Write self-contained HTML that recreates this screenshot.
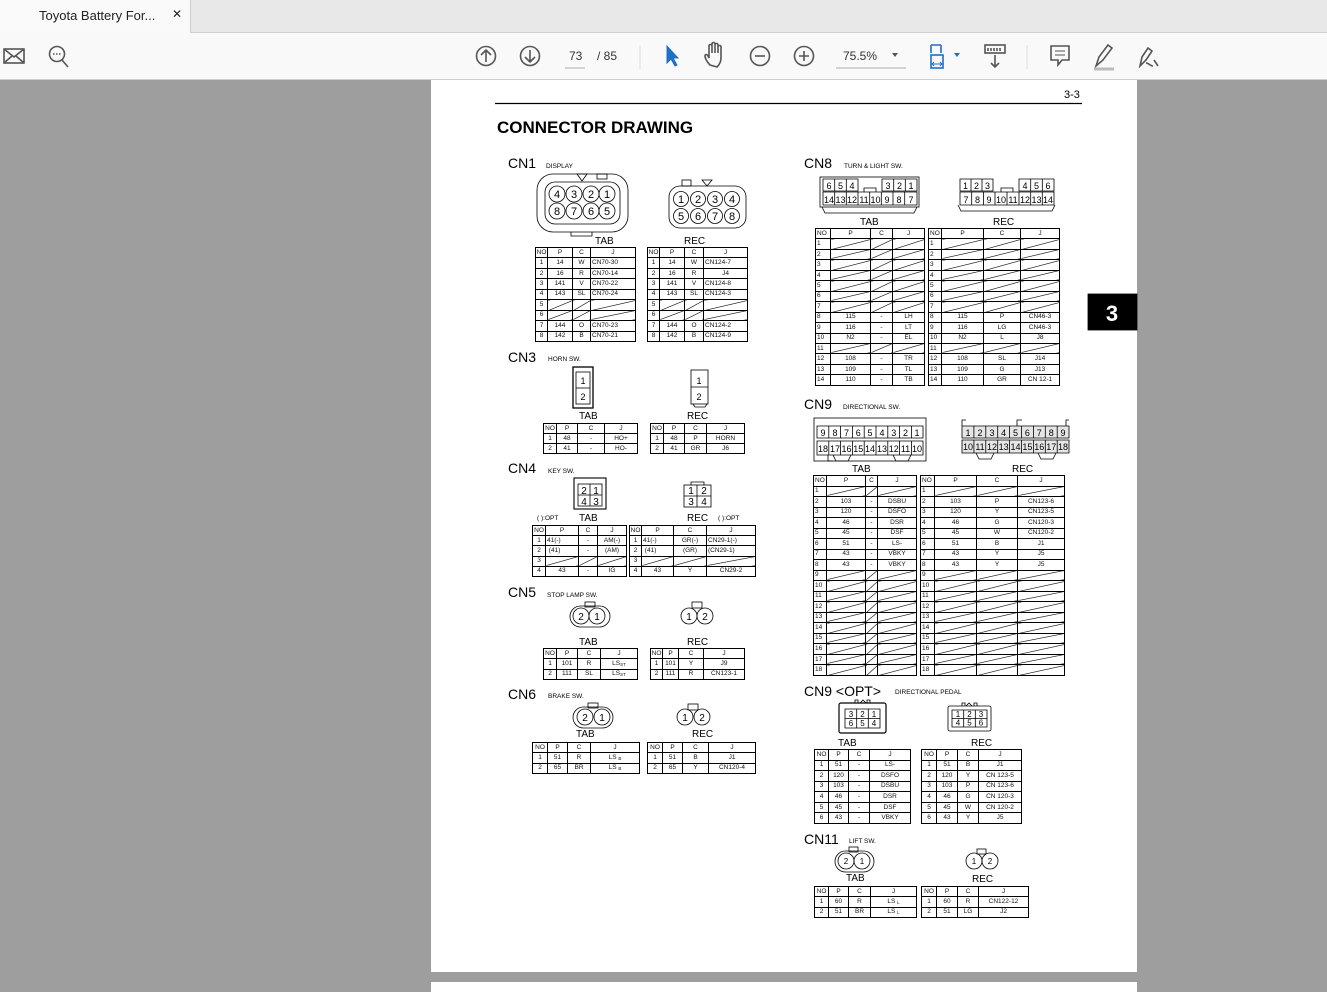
<!DOCTYPE html>
<html><head><meta charset="utf-8"><style>
body{margin:0;width:1327px;height:989px;overflow:hidden;background:#9e9e9e;font-family:"Liberation Sans",sans-serif;position:relative}
.tabbar{position:absolute;left:0;top:0;width:1327px;height:32px;background:#e8e8e8;border-bottom:1px solid #d0d0d0}
.tab{position:absolute;left:0;top:0;width:190px;height:33px;background:#fafafa;border-right:1px solid #d0d0d0;font-size:13px;color:#222}
.tool{position:absolute;left:0;top:33px;width:1327px;height:46px;background:#f9f9f9;border-bottom:1px solid #cfcfcf}
.page{position:absolute;left:431px;top:80px;width:706px;height:892px;background:#fff}
.page2{position:absolute;left:431px;top:982px;width:706px;height:10px;background:#fff}
table.t{position:absolute;border-collapse:collapse;table-layout:fixed;font-size:6.5px;color:#111}
table.t td{border:1px solid #000;padding:0;text-align:center;line-height:6px;overflow:hidden;white-space:nowrap}
table.t td.l{text-align:left;padding-left:1px}
td.x{background:linear-gradient(to bottom right,transparent calc(50% - .6px),#000 50%,transparent calc(50% + .6px))}
.s{font-size:4.5px;position:relative;top:1px}
</style></head><body>
<div class="tabbar"></div>
<div class="tab"><span style="position:absolute;left:39px;top:8px">Toyota Battery For...</span><span style="position:absolute;left:172px;top:7px;font-size:12px">✕</span></div>
<div class="tool">
<svg width="1327" height="46" style="position:absolute;left:0;top:0" fill="none" stroke="#555" stroke-width="1.6">
<rect x="4" y="16" width="20" height="14"/><path d="M4 16l10 8 10-8M4 30l8-7M24 30l-8-7"/>
<circle cx="57" cy="21" r="7.5"/><path d="M62 27l6 7"/><path d="M53 21h8" stroke-dasharray="1.5 1.5"/>
<circle cx="486" cy="23" r="9.5"/><path d="M486 29v-12M481 22l5-5 5 5"/>
<circle cx="530" cy="23" r="9.5"/><path d="M530 17v12M525 24l5 5 5-5"/>
<path d="M565 35h20" stroke="#aaa" stroke-width="1"/>
<path d="M640 12v24" stroke="#ddd" stroke-width="1"/>
<path d="M667 13l0 17 4-4 4 7 2-1-4-7 5 0z" fill="#1f6fc5" stroke="#1f6fc5" stroke-width="1"/>
<path d="M710 32c-3-3-5-7-5-9 0-2 2-2 3 0l1 2v-12c0-2 3-2 3 0v7-9c0-2 3-2 3 0v9-8c0-2 3-2 3 0v8-6c0-2 3-2 3 0v11c0 4-2 7-4 9z"/>
<circle cx="760" cy="23" r="9.5"/><path d="M755 23h10"/>
<circle cx="804" cy="23" r="9.5"/><path d="M799 23h10M804 18v10"/>
<path d="M836 35h70" stroke="#aaa" stroke-width="1"/>
<path d="M892 20l3 4 3-4z" fill="#555" stroke="none"/>
<path d="M931 12v8M941 12v8M931 12h10" stroke="#1f6fc5"/><rect x="931" y="22" width="12" height="13" stroke="#1f6fc5"/><path d="M933 31h8M934 29l-2 2 2 2M940 29l2 2-2 2" stroke="#1f6fc5" stroke-width="1"/>
<path d="M954 20l3 4 3-4z" fill="#1f6fc5" stroke="none"/>
<rect x="985" y="12" width="20" height="8"/><path d="M988 15v3M991 15v3M994 15v3M997 15v3M1000 15v3M995 22v12M991 30l4 4 4-4"/>
<path d="M1027 12v24" stroke="#ddd" stroke-width="1"/>
<path d="M1051 13h18v14h-7l-4 5v-5h-7z"/><path d="M1055 18h10M1055 22h10" stroke-width="1"/>
<path d="M1096 33l3-9 9-12 4 3-9 12z" /><path d="M1094 36h20" stroke="#bbb" stroke-width="3"/>
<path d="M1140 33l2-9 6-9 4 3-6 9zM1146 30c3 0 4 3 7 3M1154 27l4 6" />
</svg>
<span style="position:absolute;left:569px;top:16px;font-size:12px;color:#333">73</span>
<span style="position:absolute;left:597px;top:16px;font-size:12px;color:#333">/ 85</span>
<span style="position:absolute;left:843px;top:16px;font-size:12px;color:#333">75.5%</span>
</div>
<div class="page"></div>
<div class="page2"></div>

<svg width="1327" height="989" style="position:absolute;left:0;top:0" font-family="Liberation Sans" fill="none" stroke="#000" stroke-width="0.8">
<path d="M495 103.5H1082" stroke-width="1.3"/>
<text x="1064" y="98" font-size="11" fill="#000" stroke="none">3-3</text>
<text x="497" y="133" font-size="17" font-weight="bold" fill="#000" stroke="none">CONNECTOR DRAWING</text>
<rect x="1088" y="294" width="49" height="36" fill="#000"/>
<text x="1112" y="321" font-size="22" font-weight="bold" fill="#fff" stroke="none" text-anchor="middle">3</text>
<g fill="#000" stroke="none" font-size="14">
<text x="508" y="168">CN1</text><text x="508" y="362">CN3</text><text x="508" y="473">CN4</text><text x="508" y="597">CN5</text><text x="508" y="699">CN6</text>
<text x="804" y="168">CN8</text><text x="804" y="409">CN9</text><text x="804" y="696">CN9 &lt;OPT&gt;</text><text x="804" y="844">CN11</text>
</g>
<g fill="#000" stroke="none" font-size="6.5">
<text x="546" y="168">DISPLAY</text><text x="548" y="361">HORN SW.</text><text x="548" y="473">KEY SW.</text><text x="547" y="597">STOP LAMP SW.</text><text x="548" y="698">BRAKE SW.</text>
<text x="844" y="168">TURN &amp; LIGHT SW.</text><text x="843" y="409">DIRECTIONAL SW.</text><text x="895" y="694">DIRECTIONAL PEDAL</text><text x="849" y="843">LIFT SW.</text>
<text x="537" y="520">( ):OPT</text><text x="718" y="520">( ):OPT</text>
</g>
<g fill="#000" stroke="none" font-size="10">
<text x="595" y="244">TAB</text><text x="684" y="244">REC</text>
<text x="579" y="419">TAB</text><text x="687" y="419">REC</text>
<text x="579" y="521">TAB</text><text x="687" y="521">REC</text>
<text x="579" y="645">TAB</text><text x="687" y="645">REC</text>
<text x="576" y="737">TAB</text><text x="692" y="737">REC</text>
<text x="860" y="225">TAB</text><text x="993" y="225">REC</text>
<text x="852" y="472">TAB</text><text x="1012" y="472">REC</text>
<text x="838" y="746">TAB</text><text x="971" y="746">REC</text>
<text x="846" y="881">TAB</text><text x="972" y="882">REC</text>
</g>
<rect x="537" y="174" width="91" height="58" rx="16"/><rect x="545" y="182" width="75" height="42" rx="10"/>
<path d="M577 174h10l-5 7z"/><rect x="597" y="174" width="10" height="5"/><path d="M571 232v4h21v-4"/>
<g font-size="11" fill="#000" stroke="none" text-anchor="middle"><text x="557" y="198">4</text><text x="574" y="198">3</text><text x="591" y="198">2</text><text x="607" y="198">1</text><text x="557" y="215">8</text><text x="574" y="215">7</text><text x="591" y="215">6</text><text x="607" y="215">5</text></g>
<circle cx="557" cy="194" r="8"/><circle cx="574" cy="194" r="8"/><circle cx="591" cy="194" r="8"/><circle cx="607" cy="194" r="8"/>
<circle cx="557" cy="211" r="8"/><circle cx="574" cy="211" r="8"/><circle cx="591" cy="211" r="8"/><circle cx="607" cy="211" r="8"/>
<rect x="669" y="186" width="77" height="42" rx="11"/>
<path d="M702 180h10l-5 6z"/><rect x="682" y="180" width="9" height="6"/>
<g font-size="11" fill="#000" stroke="none" text-anchor="middle"><text x="681" y="203">1</text><text x="698" y="203">2</text><text x="715" y="203">3</text><text x="732" y="203">4</text><text x="681" y="220">5</text><text x="698" y="220">6</text><text x="715" y="220">7</text><text x="732" y="220">8</text></g>
<circle cx="681" cy="199" r="7.5"/><circle cx="698" cy="199" r="7.5"/><circle cx="715" cy="199" r="7.5"/><circle cx="732" cy="199" r="7.5"/>
<circle cx="681" cy="216" r="7.5"/><circle cx="698" cy="216" r="7.5"/><circle cx="715" cy="216" r="7.5"/><circle cx="732" cy="216" r="7.5"/>
<rect x="573" y="367" width="20" height="41" stroke-width="1.3"/><rect x="576" y="372" width="14" height="32"/><path d="M576 388h14"/>
<rect x="691" y="370" width="17" height="34"/><path d="M691 387h17M693 404l2 3h10l2-3"/>
<g font-size="9" fill="#000" stroke="none" text-anchor="middle"><text x="583" y="384">1</text><text x="583" y="400">2</text><text x="699" y="384">1</text><text x="699" y="400">2</text></g>
<rect x="574" y="478" width="32" height="31" stroke-width="1.1"/><rect x="578" y="484" width="24" height="22"/><path d="M590 484v22M578 495h24"/>
<rect x="684" y="485" width="27" height="22"/><path d="M697 485v22M684 496h27M691 485v-3h13v3"/>
<g font-size="10" fill="#000" stroke="none" text-anchor="middle"><text x="584" y="494">2</text><text x="596" y="494">1</text><text x="584" y="505">4</text><text x="596" y="505">3</text><text x="691" y="494">1</text><text x="704" y="494">2</text><text x="691" y="505">3</text><text x="704" y="505">4</text></g>
<rect x="570" y="606" width="40" height="21" rx="10.5"/><rect x="585" y="602" width="10" height="5"/>
<circle cx="581" cy="616" r="8"/><circle cx="597" cy="616" r="8"/>
<circle cx="689" cy="616" r="8"/><circle cx="705" cy="616" r="8"/><rect x="692" y="602" width="10" height="6"/>
<rect x="573" y="707" width="40" height="21" rx="10.5"/><rect x="588" y="703" width="10" height="5"/>
<circle cx="585" cy="717" r="8"/><circle cx="602" cy="717" r="8"/>
<circle cx="685" cy="717" r="8"/><circle cx="702" cy="717" r="8"/><rect x="688" y="704" width="10" height="6"/>
<rect x="835" y="851" width="39" height="21" rx="10.5"/><rect x="849" y="847" width="9" height="5"/>
<circle cx="846" cy="861" r="8"/><circle cx="862" cy="861" r="8"/>
<circle cx="974" cy="861" r="8"/><circle cx="990" cy="861" r="8"/><rect x="977" y="849" width="9" height="5"/>
<g font-size="10" fill="#000" stroke="none" text-anchor="middle">
<text x="581" y="620">2</text><text x="597" y="620">1</text><text x="689" y="620">1</text><text x="705" y="620">2</text>
<text x="585" y="721">2</text><text x="602" y="721">1</text><text x="685" y="721">1</text><text x="702" y="721">2</text>
<text x="846" y="864" font-size="8">2</text><text x="862" y="864" font-size="8">1</text><text x="974" y="864" font-size="8">1</text><text x="990" y="864" font-size="8">2</text>
</g>
<rect x="820" y="177" width="99" height="30"/><path d="M822 207l3 6h89l3-6"/>
<path d="M823 179h35v12h-35zM834.7 179v12M846.3 179v12M882 179h35v12h-35zM893.7 179v12M905.3 179v12M823 192h94v13h-94z"/>
<path d="M834.7 192v13M846.3 192v13M858 192v13M869.7 192v13M881.3 192v13M893 192v13M904.7 192v13M864 192v-4h12v4"/>
<g font-size="9" fill="#000" stroke="none" text-anchor="middle">
<text x="829" y="189">6</text><text x="840.5" y="189">5</text><text x="852" y="189">4</text><text x="888" y="189">3</text><text x="899.5" y="189">2</text><text x="911" y="189">1</text>
<text x="829" y="203">14</text><text x="840.5" y="203">13</text><text x="852" y="203">12</text><text x="864" y="203">11</text><text x="875.5" y="203">10</text><text x="887" y="203">9</text><text x="899" y="203">8</text><text x="911" y="203">7</text>
</g>
<path d="M960 179h33v12h-33zM971 179v12M982 179v12M1019 179h35v12h-35zM1030.7 179v12M1042.3 179v12M960 192h94v13h-94z"/>
<path d="M971.7 192v13M983.5 192v13M995 192v13M1007 192v13M1019 192v13M1030.7 192v13M1042.3 192v13M1001 192v-4h12v4M958 205l3 6h91l3-6"/>
<g font-size="9" fill="#000" stroke="none" text-anchor="middle">
<text x="965.5" y="189">1</text><text x="976.5" y="189">2</text><text x="987.5" y="189">3</text><text x="1025" y="189">4</text><text x="1036.5" y="189">5</text><text x="1048" y="189">6</text>
<text x="966" y="203">7</text><text x="977.5" y="203">8</text><text x="989" y="203">9</text><text x="1001" y="203">10</text><text x="1013" y="203">11</text><text x="1025" y="203">12</text><text x="1036.5" y="203">13</text><text x="1048" y="203">14</text>
</g>
<rect x="814" y="418" width="112" height="43"/>
<path d="M817 426h106v12h-106zM817 441h106v14h-106zM828.8 426v12M840.6 426v12M852.4 426v12M864.2 426v12M876 426v12M887.8 426v12M899.6 426v12M911.4 426v12M828.8 441v14M840.6 441v14M852.4 441v14M864.2 441v14M876 441v14M887.8 441v14M899.6 441v14M911.4 441v14M828 455v6h5M833 455l3 6h12l3-6M893 455l3 6h12l3-6"/>
<g font-size="9" fill="#000" stroke="none" text-anchor="middle">
<text x="823" y="436">9</text><text x="835" y="436">8</text><text x="846.5" y="436">7</text><text x="858.3" y="436">6</text><text x="870" y="436">5</text><text x="882" y="436">4</text><text x="893.7" y="436">3</text><text x="905.5" y="436">2</text><text x="917" y="436">1</text>
<text x="823" y="452">18</text><text x="835" y="452">17</text><text x="846.5" y="452">16</text><text x="858.3" y="452">15</text><text x="870" y="452">14</text><text x="882" y="452">13</text><text x="893.7" y="452">12</text><text x="905.5" y="452">11</text><text x="917" y="452">10</text>
</g>
<path d="M962 426h107v12h-107zM962 440h107v13h-107z" fill="#e6e6e6"/>
<path d="M973.9 426v12M985.8 426v12M997.7 426v12M1009.6 426v12M1021.5 426v12M1033.4 426v12M1045.3 426v12M1057.2 426v12M973.9 440v13M985.8 440v13M997.7 440v13M1009.6 440v13M1021.5 440v13M1033.4 440v13M1045.3 440v13M1057.2 440v13M976 453l3 6h12l3-6M1038 453l3 6h12l3-6M962 426v-6h4M1017 426v-6h5M1066 426v-6h3"/>
<g font-size="9" fill="#000" stroke="none" text-anchor="middle">
<text x="968" y="436">1</text><text x="980" y="436">2</text><text x="992" y="436">3</text><text x="1003.6" y="436">4</text><text x="1015.5" y="436">5</text><text x="1027.4" y="436">6</text><text x="1039.3" y="436">7</text><text x="1051.2" y="436">8</text><text x="1063" y="436">9</text>
<text x="968" y="450">10</text><text x="980" y="450">11</text><text x="992" y="450">12</text><text x="1003.6" y="450">13</text><text x="1015.5" y="450">14</text><text x="1027.4" y="450">15</text><text x="1039.3" y="450">16</text><text x="1051.2" y="450">17</text><text x="1063" y="450">18</text>
</g>
<rect x="839" y="703" width="47" height="30" rx="2" stroke-width="1.2"/><path d="M845 709h35v19h-35zM845 718.5h35M856.7 709v19M868.3 709v19M855 703v-3h3v3M867 703v-3h3v3M860 703l3-3 3 3"/>
<rect x="948" y="706" width="43" height="25" rx="2"/><path d="M952 710h35v17h-35zM952 718.5h35M963.7 710v17M975.3 710v17M962 706v-3h3v3M974 706v-3h3v3M966 706l3-3 3 3"/>
<g font-size="8" fill="#000" stroke="none" text-anchor="middle">
<text x="851" y="717">3</text><text x="862.5" y="717">2</text><text x="874" y="717">1</text><text x="851" y="726">6</text><text x="862.5" y="726">5</text><text x="874" y="726">4</text>
<text x="958" y="717">1</text><text x="969.5" y="717">2</text><text x="981" y="717">3</text><text x="958" y="725.5">4</text><text x="969.5" y="725.5">5</text><text x="981" y="725.5">6</text>
</g>
</svg>

<table class="t" style="left:535px;top:247px;width:101px;height:95px"><colgroup><col style="width:12px"><col style="width:25px"><col style="width:18px"><col></colgroup>
<tr><td>NO</td><td>P</td><td>C</td><td>J</td></tr>
<tr><td>1</td><td>14</td><td>W</td><td class="l">CN70-30</td></tr>
<tr><td>2</td><td>16</td><td>R</td><td class="l">CN70-14</td></tr>
<tr><td>3</td><td>141</td><td>V</td><td class="l">CN70-22</td></tr>
<tr><td>4</td><td>143</td><td>SL</td><td class="l">CN70-24</td></tr>
<tr><td>5</td><td class="x"></td><td class="x"></td><td class="x"></td></tr>
<tr><td>6</td><td class="x"></td><td class="x"></td><td class="x"></td></tr>
<tr><td>7</td><td>144</td><td>O</td><td class="l">CN70-23</td></tr>
<tr><td>8</td><td>142</td><td>B</td><td class="l">CN70-21</td></tr></table>
<table class="t" style="left:647px;top:247px;width:101px;height:95px"><colgroup><col style="width:12px"><col style="width:25px"><col style="width:19px"><col></colgroup>
<tr><td>NO</td><td>P</td><td>C</td><td>J</td></tr>
<tr><td>1</td><td>14</td><td>W</td><td class="l">CN124-7</td></tr>
<tr><td>2</td><td>16</td><td>R</td><td>J4</td></tr>
<tr><td>3</td><td>141</td><td>V</td><td class="l">CN124-8</td></tr>
<tr><td>4</td><td>143</td><td>SL</td><td class="l">CN124-3</td></tr>
<tr><td>5</td><td class="x"></td><td class="x"></td><td class="x"></td></tr>
<tr><td>6</td><td class="x"></td><td class="x"></td><td class="x"></td></tr>
<tr><td>7</td><td>144</td><td>O</td><td class="l">CN124-2</td></tr>
<tr><td>8</td><td>142</td><td>B</td><td class="l">CN124-9</td></tr></table>
<table class="t" style="left:543px;top:423px;width:95px;height:31px"><colgroup><col style="width:13px"><col style="width:21px"><col style="width:27px"><col></colgroup>
<tr><td>NO</td><td>P</td><td>C</td><td>J</td></tr><tr><td>1</td><td>48</td><td>-</td><td>HO+</td></tr><tr><td>2</td><td>41</td><td>-</td><td>HO-</td></tr></table>
<table class="t" style="left:650px;top:423px;width:95px;height:31px"><colgroup><col style="width:13px"><col style="width:21px"><col style="width:22px"><col></colgroup>
<tr><td>NO</td><td>P</td><td>C</td><td>J</td></tr><tr><td>1</td><td>48</td><td>P</td><td>HORN</td></tr><tr><td>2</td><td>41</td><td>GR</td><td>J6</td></tr></table>
<table class="t" style="left:532px;top:525px;width:95px;height:52px"><colgroup><col style="width:13px"><col style="width:33px"><col style="width:19px"><col></colgroup>
<tr><td>NO</td><td>P</td><td>C</td><td>J</td></tr><tr><td>1</td><td class="l">41(-)</td><td>-</td><td>AM(-)</td></tr><tr><td>2</td><td class="l">&nbsp;(41)</td><td>-</td><td>(AM)</td></tr>
<tr><td>3</td><td class="x"></td><td class="x"></td><td class="x"></td></tr><tr><td>4</td><td>43</td><td>-</td><td>IG</td></tr></table>
<table class="t" style="left:629px;top:525px;width:127px;height:52px"><colgroup><col style="width:12px"><col style="width:32px"><col style="width:33px"><col></colgroup>
<tr><td>NO</td><td>P</td><td>C</td><td>J</td></tr><tr><td>1</td><td class="l">41(-)</td><td>GR(-)</td><td class="l">CN29-1(-)</td></tr><tr><td>2</td><td class="l">&nbsp;(41)</td><td>(GR)</td><td class="l">(CN29-1)</td></tr>
<tr><td>3</td><td class="x"></td><td class="x"></td><td class="x"></td></tr><tr><td>4</td><td>43</td><td>Y</td><td>CN29-2</td></tr></table>
<table class="t" style="left:543px;top:648px;width:95px;height:32px"><colgroup><col style="width:13px"><col style="width:21px"><col style="width:23px"><col></colgroup>
<tr><td>NO</td><td>P</td><td>C</td><td>J</td></tr><tr><td>1</td><td>101</td><td>R</td><td>LS<span class="s">ST</span></td></tr><tr><td>2</td><td>111</td><td>SL</td><td>LS<span class="s">ST</span></td></tr></table>
<table class="t" style="left:650px;top:648px;width:95px;height:32px"><colgroup><col style="width:12px"><col style="width:16px"><col style="width:25px"><col></colgroup>
<tr><td>NO</td><td>P</td><td>C</td><td>J</td></tr><tr><td>1</td><td>101</td><td>Y</td><td>J9</td></tr><tr><td>2</td><td>111</td><td>R</td><td>CN123-1</td></tr></table>
<table class="t" style="left:532px;top:742px;width:108px;height:32px"><colgroup><col style="width:15px"><col style="width:20px"><col style="width:23px"><col></colgroup>
<tr><td>NO</td><td>P</td><td>C</td><td>J</td></tr><tr><td>1</td><td>51</td><td>R</td><td>LS <span class="s">B</span></td></tr><tr><td>2</td><td>65</td><td>BR</td><td>LS <span class="s">B</span></td></tr></table>
<table class="t" style="left:647px;top:742px;width:109px;height:32px"><colgroup><col style="width:15px"><col style="width:20px"><col style="width:26px"><col></colgroup>
<tr><td>NO</td><td>P</td><td>C</td><td>J</td></tr><tr><td>1</td><td>51</td><td>B</td><td>J1</td></tr><tr><td>2</td><td>65</td><td>Y</td><td>CN120-4</td></tr></table>
<table class="t" style="left:815px;top:228px;width:110px;height:158px"><colgroup><col style="width:15px"><col style="width:40px"><col style="width:22px"><col></colgroup>
<tr><td class="l">NO</td><td>P</td><td>C</td><td>J</td></tr>
<tr><td class="l">1</td><td class="x"></td><td class="x"></td><td class="x"></td></tr>
<tr><td class="l">2</td><td class="x"></td><td class="x"></td><td class="x"></td></tr>
<tr><td class="l">3</td><td class="x"></td><td class="x"></td><td class="x"></td></tr>
<tr><td class="l">4</td><td class="x"></td><td class="x"></td><td class="x"></td></tr>
<tr><td class="l">5</td><td class="x"></td><td class="x"></td><td class="x"></td></tr>
<tr><td class="l">6</td><td class="x"></td><td class="x"></td><td class="x"></td></tr>
<tr><td class="l">7</td><td class="x"></td><td class="x"></td><td class="x"></td></tr>
<tr><td class="l">8</td><td>115</td><td>-</td><td>LH</td></tr>
<tr><td class="l">9</td><td>116</td><td>-</td><td>LT</td></tr>
<tr><td class="l">10</td><td>N2</td><td>-</td><td>EL</td></tr>
<tr><td class="l">11</td><td class="x"></td><td class="x"></td><td class="x"></td></tr>
<tr><td class="l">12</td><td>108</td><td>-</td><td>TR</td></tr>
<tr><td class="l">13</td><td>109</td><td>-</td><td>TL</td></tr>
<tr><td class="l">14</td><td>110</td><td>-</td><td>TB</td></tr></table>
<table class="t" style="left:928px;top:228px;width:132px;height:158px"><colgroup><col style="width:13px"><col style="width:42px"><col style="width:37px"><col></colgroup>
<tr><td class="l">NO</td><td>P</td><td>C</td><td>J</td></tr>
<tr><td class="l">1</td><td class="x"></td><td class="x"></td><td class="x"></td></tr>
<tr><td class="l">2</td><td class="x"></td><td class="x"></td><td class="x"></td></tr>
<tr><td class="l">3</td><td class="x"></td><td class="x"></td><td class="x"></td></tr>
<tr><td class="l">4</td><td class="x"></td><td class="x"></td><td class="x"></td></tr>
<tr><td class="l">5</td><td class="x"></td><td class="x"></td><td class="x"></td></tr>
<tr><td class="l">6</td><td class="x"></td><td class="x"></td><td class="x"></td></tr>
<tr><td class="l">7</td><td class="x"></td><td class="x"></td><td class="x"></td></tr>
<tr><td class="l">8</td><td>115</td><td>P</td><td>CN46-3</td></tr>
<tr><td class="l">9</td><td>116</td><td>LG</td><td>CN46-3</td></tr>
<tr><td class="l">10</td><td>N2</td><td>L</td><td>J8</td></tr>
<tr><td class="l">11</td><td class="x"></td><td class="x"></td><td class="x"></td></tr>
<tr><td class="l">12</td><td>108</td><td>SL</td><td>J14</td></tr>
<tr><td class="l">13</td><td>109</td><td>G</td><td>J13</td></tr>
<tr><td class="l">14</td><td>110</td><td>GR</td><td>CN 12-1</td></tr></table>
<table class="t" style="left:813px;top:475px;width:104px;height:201px"><colgroup><col style="width:13px"><col style="width:39px"><col style="width:12px"><col></colgroup>
<tr><td class="l">NO</td><td>P</td><td>C</td><td>J</td></tr>
<tr><td class="l">1</td><td class="x"></td><td class="x"></td><td class="x"></td></tr>
<tr><td class="l">2</td><td>103</td><td>-</td><td>DSBU</td></tr>
<tr><td class="l">3</td><td>120</td><td>-</td><td>DSFO</td></tr>
<tr><td class="l">4</td><td>46</td><td>-</td><td>DSR</td></tr>
<tr><td class="l">5</td><td>45</td><td>-</td><td>DSF</td></tr>
<tr><td class="l">6</td><td>51</td><td>-</td><td>LS-</td></tr>
<tr><td class="l">7</td><td>43</td><td>-</td><td>VBKY</td></tr>
<tr><td class="l">8</td><td>43</td><td>-</td><td>VBKY</td></tr>
<tr><td class="l">9</td><td class="x"></td><td class="x"></td><td class="x"></td></tr>
<tr><td class="l">10</td><td class="x"></td><td class="x"></td><td class="x"></td></tr>
<tr><td class="l">11</td><td class="x"></td><td class="x"></td><td class="x"></td></tr>
<tr><td class="l">12</td><td class="x"></td><td class="x"></td><td class="x"></td></tr>
<tr><td class="l">13</td><td class="x"></td><td class="x"></td><td class="x"></td></tr>
<tr><td class="l">14</td><td class="x"></td><td class="x"></td><td class="x"></td></tr>
<tr><td class="l">15</td><td class="x"></td><td class="x"></td><td class="x"></td></tr>
<tr><td class="l">16</td><td class="x"></td><td class="x"></td><td class="x"></td></tr>
<tr><td class="l">17</td><td class="x"></td><td class="x"></td><td class="x"></td></tr>
<tr><td class="l">18</td><td class="x"></td><td class="x"></td><td class="x"></td></tr></table>
<table class="t" style="left:920px;top:475px;width:145px;height:201px"><colgroup><col style="width:14px"><col style="width:42px"><col style="width:41px"><col></colgroup>
<tr><td class="l">NO</td><td>P</td><td>C</td><td>J</td></tr>
<tr><td class="l">1</td><td class="x"></td><td class="x"></td><td class="x"></td></tr>
<tr><td class="l">2</td><td>103</td><td>P</td><td>CN123-6</td></tr>
<tr><td class="l">3</td><td>120</td><td>Y</td><td>CN123-5</td></tr>
<tr><td class="l">4</td><td>46</td><td>G</td><td>CN120-3</td></tr>
<tr><td class="l">5</td><td>45</td><td>W</td><td>CN120-2</td></tr>
<tr><td class="l">6</td><td>51</td><td>B</td><td>J1</td></tr>
<tr><td class="l">7</td><td>43</td><td>Y</td><td>J5</td></tr>
<tr><td class="l">8</td><td>43</td><td>Y</td><td>J5</td></tr>
<tr><td class="l">9</td><td class="x"></td><td class="x"></td><td class="x"></td></tr>
<tr><td class="l">10</td><td class="x"></td><td class="x"></td><td class="x"></td></tr>
<tr><td class="l">11</td><td class="x"></td><td class="x"></td><td class="x"></td></tr>
<tr><td class="l">12</td><td class="x"></td><td class="x"></td><td class="x"></td></tr>
<tr><td class="l">13</td><td class="x"></td><td class="x"></td><td class="x"></td></tr>
<tr><td class="l">14</td><td class="x"></td><td class="x"></td><td class="x"></td></tr>
<tr><td class="l">15</td><td class="x"></td><td class="x"></td><td class="x"></td></tr>
<tr><td class="l">16</td><td class="x"></td><td class="x"></td><td class="x"></td></tr>
<tr><td class="l">17</td><td class="x"></td><td class="x"></td><td class="x"></td></tr>
<tr><td class="l">18</td><td class="x"></td><td class="x"></td><td class="x"></td></tr></table>
<table class="t" style="left:814px;top:749px;width:97px;height:75px"><colgroup><col style="width:14px"><col style="width:20px"><col style="width:21px"><col></colgroup>
<tr><td>NO</td><td>P</td><td>C</td><td>J</td></tr>
<tr><td>1</td><td>51</td><td>-</td><td>LS-</td></tr><tr><td>2</td><td>120</td><td>-</td><td>DSFO</td></tr><tr><td>3</td><td>103</td><td>-</td><td>DSBU</td></tr>
<tr><td>4</td><td>46</td><td>-</td><td>DSR</td></tr><tr><td>5</td><td>45</td><td>-</td><td>DSF</td></tr><tr><td>6</td><td>43</td><td>-</td><td>VBKY</td></tr></table>
<table class="t" style="left:921px;top:749px;width:101px;height:75px"><colgroup><col style="width:15px"><col style="width:21px"><col style="width:21px"><col></colgroup>
<tr><td>NO</td><td>P</td><td>C</td><td>J</td></tr>
<tr><td>1</td><td>51</td><td>B</td><td>J1</td></tr><tr><td>2</td><td>120</td><td>Y</td><td>CN 123-5</td></tr><tr><td>3</td><td>103</td><td>P</td><td>CN 123-6</td></tr>
<tr><td>4</td><td>46</td><td>G</td><td>CN 120-3</td></tr><tr><td>5</td><td>45</td><td>W</td><td>CN 120-2</td></tr><tr><td>6</td><td>43</td><td>Y</td><td>J5</td></tr></table>
<table class="t" style="left:814px;top:886px;width:103px;height:32px"><colgroup><col style="width:14px"><col style="width:20px"><col style="width:22px"><col></colgroup>
<tr><td>NO</td><td>P</td><td>C</td><td>J</td></tr><tr><td>1</td><td>60</td><td>R</td><td>LS <span class="s">L</span></td></tr><tr><td>2</td><td>51</td><td>BR</td><td>LS <span class="s">L</span></td></tr></table>
<table class="t" style="left:921px;top:886px;width:108px;height:32px"><colgroup><col style="width:15px"><col style="width:21px"><col style="width:21px"><col></colgroup>
<tr><td>NO</td><td>P</td><td>C</td><td>J</td></tr><tr><td>1</td><td>60</td><td>R</td><td>CN122-12</td></tr><tr><td>2</td><td>51</td><td>LG</td><td>J2</td></tr></table>
</body></html>
